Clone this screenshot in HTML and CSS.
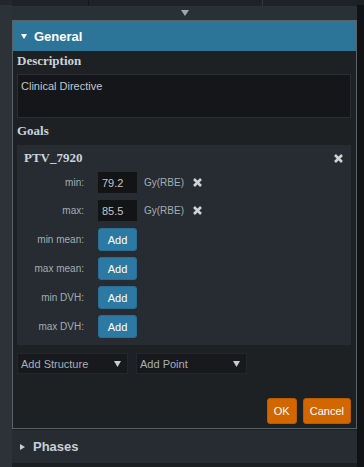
FILE: index.html
```html
<!DOCTYPE html>
<html lang="en">
<head>
  <meta charset="UTF-8" />
  <title>Clinical Directive</title>
  <link rel="stylesheet" href="styles.css">
</head>
<body>
  <div class="shell">
    <div class="side"></div>

    <div class="main">
      <div class="tabs">
        <div class="tab tab-a"></div>
        <div class="tab tab-b"></div>
        <div class="tab tab-c"></div>
      </div>
      <div class="collapse-bar">
        <svg class="caret-top" width="8" height="6" viewBox="0 0 8 6"><path d="M0 0H8L4 6Z" fill="#a3a8ac"/></svg>
      </div>

      <div class="panel">
        <div class="panel-head">
          <svg class="head-caret" width="6" height="5" viewBox="0 0 6 5"><path d="M0 0H6L3 5Z" fill="#ffffff"/></svg>
          <span>General</span>
        </div>

        <div class="panel-body">
          <div class="section-label first">Description</div>
          <div class="textbox">Clinical Directive</div>

          <div class="section-label">Goals</div>
          <div class="goal-card">
            <div class="goal-title">
              <span>PTV_7920</span>
              <svg class="x-icon" width="9" height="9" viewBox="0 0 9 9"><path d="M1 1L8 8M8 1L1 8" stroke="#cfd3d6" stroke-width="2.6"/></svg>
            </div>

            <div class="goal-row">
              <span class="goal-label">min:</span>
              <input class="dose" type="text" value="79.2">
              <span class="unit">Gy(RBE)</span>
              <svg class="x-icon" width="9" height="9" viewBox="0 0 9 9"><path d="M1 1L8 8M8 1L1 8" stroke="#cfd3d6" stroke-width="2.6"/></svg>
            </div>
            <div class="goal-row">
              <span class="goal-label">max:</span>
              <input class="dose" type="text" value="85.5">
              <span class="unit">Gy(RBE)</span>
              <svg class="x-icon" width="9" height="9" viewBox="0 0 9 9"><path d="M1 1L8 8M8 1L1 8" stroke="#cfd3d6" stroke-width="2.6"/></svg>
            </div>
            <div class="goal-row add-row">
              <span class="goal-label">min mean:</span>
              <button class="btn-add">Add</button>
            </div>
            <div class="goal-row add-row">
              <span class="goal-label">max mean:</span>
              <button class="btn-add">Add</button>
            </div>
            <div class="goal-row add-row">
              <span class="goal-label">min DVH:</span>
              <button class="btn-add">Add</button>
            </div>
            <div class="goal-row add-row">
              <span class="goal-label">max DVH:</span>
              <button class="btn-add">Add</button>
            </div>
          </div>

          <div class="pickers">
            <div class="select">
              <span>Add Structure</span>
              <svg width="7" height="6" viewBox="0 0 7 6"><path d="M0 0H7L3.5 6Z" fill="#c8cbcf"/></svg>
            </div>
            <div class="select">
              <span>Add Point</span>
              <svg width="7" height="6" viewBox="0 0 7 6"><path d="M0 0H7L3.5 6Z" fill="#c8cbcf"/></svg>
            </div>
          </div>

          <div class="actions">
            <button class="btn-orange ok">OK</button>
            <button class="btn-orange">Cancel</button>
          </div>
        </div>
      </div>

      <div class="phases">
        <svg class="phase-caret" width="5" height="6" viewBox="0 0 5 6"><path d="M0 0L5 3L0 6Z" fill="#c8cfd5"/></svg>
        <span>Phases</span>
      </div>
    </div>

    <div class="edge"></div>
  </div>
</body>
</html>
```

FILE: styles.css
```css
html, body {
  margin: 0;
  padding: 0;
}
body {
  background-color: #1c1f22;
  font-family: "Liberation Sans", Arial, sans-serif;
  width: 364px;
  height: 467px;
  overflow: hidden;
}
.shell {
  display: flex;
  height: 467px;
}
.side {
  width: 12px;
  background-color: #2b3238;
  border-top: 5px solid #22272b;
  box-sizing: border-box;
}
.edge {
  width: 7px;
  background-color: #101214;
  border-top: 5px solid #1d2124;
  box-sizing: border-box;
}
.main {
  width: 345px;
  display: flex;
  flex-direction: column;
}
.tabs {
  height: 6px;
  display: flex;
  background-color: #1e2226;
}
.tab {
  height: 6px;
}
.tab-a {
  width: 76px;
  border-right: 1px solid #15181a;
}
.tab-b {
  width: 173px;
  border-right: 1px solid #34393d;
}
.tab-c {
  flex: 1;
}
.collapse-bar {
  height: 14px;
  background-color: #2a3136;
  display: flex;
  justify-content: center;
  align-items: center;
}
.caret-top {
  margin-left: 1px;
}
.panel {
  border: 1px solid #5a6268;
  background-color: #1e2124;
  height: 409px;
  box-sizing: border-box;
  display: flex;
  flex-direction: column;
}
.panel-head {
  height: 30px;
  background-color: #2c7599;
  display: flex;
  align-items: center;
  color: #ffffff;
  font-weight: bold;
  font-size: 13px;
}
.head-caret {
  margin-left: 8px;
  margin-right: 7px;
}
.panel-body {
  flex: 1;
  padding: 0 5px 0 4px;
  display: flex;
  flex-direction: column;
}
.section-label {
  font-family: "Liberation Serif", "Times New Roman", serif;
  font-weight: bold;
  font-size: 13px;
  color: #c9d3db;
  height: 18px;
  line-height: 18px;
  margin: 4px 0 5px;
}
.section-label.first {
  margin: 1px 0 4px;
}
.textbox {
  height: 44px;
  box-sizing: border-box;
  background-color: #141619;
  border: 1px solid #2a2e32;
  color: #c3c7cb;
  font-size: 11px;
  padding: 5px 3px;
}
.goal-card {
  height: 200px;
  box-sizing: border-box;
  background-color: #262c31;
  padding: 5px 8px 0 0;
}
.goal-title {
  display: flex;
  justify-content: space-between;
  align-items: center;
  height: 16px;
  padding-left: 7px;
  margin-bottom: 6px;
  font-family: "Liberation Serif", "Times New Roman", serif;
  font-weight: bold;
  font-size: 13px;
  color: #c9d3db;
}
.goal-title .x-icon {
  margin-top: 1px;
}
.goal-row {
  display: flex;
  align-items: center;
  height: 21px;
  margin-bottom: 7px;
}
.goal-row.add-row {
  height: 23px;
  margin-bottom: 6px;
}
.goal-label {
  width: 67px;
  text-align: right;
  margin-right: 14px;
  font-size: 10px;
  color: #a4acb3;
}
.dose {
  width: 39px;
  height: 21px;
  box-sizing: border-box;
  background-color: #121416;
  border: none;
  color: #c3c7cb;
  font-family: "Liberation Sans", Arial, sans-serif;
  font-size: 11px;
  padding: 0 4px;
  margin: 0;
}
.unit {
  font-size: 10px;
  color: #a4acb3;
  margin-left: 7px;
  margin-right: 9px;
}
.btn-add {
  width: 39px;
  height: 23px;
  margin: 0;
  padding: 0;
  border: 1px solid #2a6f93;
  border-radius: 3px;
  background-color: #2c7aa3;
  color: #ffffff;
  font-family: "Liberation Sans", Arial, sans-serif;
  font-size: 11px;
}
.pickers {
  display: flex;
  gap: 8px;
  margin-top: 8px;
}
.select {
  width: 111px;
  height: 21px;
  box-sizing: border-box;
  background-color: #17191c;
  border: 1px solid #24272a;
  display: flex;
  align-items: center;
  justify-content: space-between;
  padding: 0 6px 0 3px;
  font-size: 11px;
  color: #a9afb4;
}
.actions {
  display: flex;
  justify-content: flex-end;
  gap: 6px;
  margin-top: 24px;
}
.btn-orange {
  height: 26px;
  margin: 0;
  padding: 0 6px;
  border: 1px solid #b85c00;
  border-radius: 3px;
  background-color: #d26700;
  color: #ffffff;
  font-family: "Liberation Sans", Arial, sans-serif;
  font-size: 11px;
}
.btn-orange.ok {
  width: 30px;
  padding: 0;
}
.phases {
  height: 33px;
  margin-top: 1px;
  background-color: #262c31;
  display: flex;
  align-items: center;
  color: #c8cfd5;
  font-weight: bold;
  font-size: 13px;
}
.phase-caret {
  margin-left: 8px;
  margin-right: 8px;
}
```
